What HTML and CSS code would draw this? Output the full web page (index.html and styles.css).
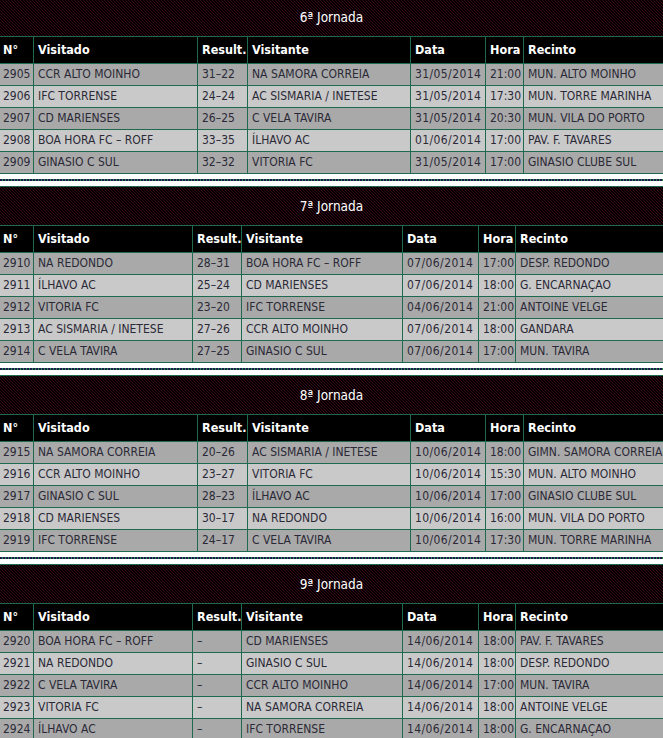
FILE: index.html
```html
<!DOCTYPE html>
<html lang="pt">
<head>
<meta charset="utf-8">
<title>Jornadas</title>
<link rel="stylesheet" href="styles.css">
</head>
<body>
<div class="page">

  <section class="round">
    <div class="title">6ª Jornada</div>
    <div class="grid wide">
      <div class="row head"><div>N°</div><div>Visitado</div><div>Result.</div><div>Visitante</div><div>Data</div><div>Hora</div><div>Recinto</div></div>
      <div class="row odd"><div>2905</div><div>CCR ALTO MOINHO</div><div>31–22</div><div>NA SAMORA CORREIA</div><div class="date">31/05/2014</div><div>21:00</div><div>MUN. ALTO MOINHO</div></div>
      <div class="row even"><div>2906</div><div>IFC TORRENSE</div><div>24–24</div><div>AC SISMARIA / INETESE</div><div class="date">31/05/2014</div><div>17:30</div><div>MUN. TORRE MARINHA</div></div>
      <div class="row odd"><div>2907</div><div>CD MARIENSES</div><div>26–25</div><div>C VELA TAVIRA</div><div class="date">31/05/2014</div><div>20:30</div><div>MUN. VILA DO PORTO</div></div>
      <div class="row even"><div>2908</div><div>BOA HORA FC – ROFF</div><div>33–35</div><div>ÍLHAVO AC</div><div class="date">01/06/2014</div><div>17:00</div><div>PAV. F. TAVARES</div></div>
      <div class="row odd"><div>2909</div><div>GINASIO C SUL</div><div>32–32</div><div>VITORIA FC</div><div class="date">31/05/2014</div><div>17:00</div><div>GINASIO CLUBE SUL</div></div>
    </div>
    <div class="sep"><div class="dash"></div></div>
  </section>

  <section class="round">
    <div class="title">7ª Jornada</div>
    <div class="grid narrow">
      <div class="row head"><div>N°</div><div>Visitado</div><div>Result.</div><div>Visitante</div><div>Data</div><div>Hora</div><div>Recinto</div></div>
      <div class="row odd"><div>2910</div><div>NA REDONDO</div><div>28–31</div><div>BOA HORA FC – ROFF</div><div class="date">07/06/2014</div><div>17:00</div><div>DESP. REDONDO</div></div>
      <div class="row even"><div>2911</div><div>ÍLHAVO AC</div><div>25–24</div><div>CD MARIENSES</div><div class="date">07/06/2014</div><div>18:00</div><div>G. ENCARNAÇAO</div></div>
      <div class="row odd"><div>2912</div><div>VITORIA FC</div><div>23–20</div><div>IFC TORRENSE</div><div class="date">04/06/2014</div><div>21:00</div><div>ANTOINE VELGE</div></div>
      <div class="row even"><div>2913</div><div>AC SISMARIA / INETESE</div><div>27–26</div><div>CCR ALTO MOINHO</div><div class="date">07/06/2014</div><div>18:00</div><div>GANDARA</div></div>
      <div class="row odd"><div>2914</div><div>C VELA TAVIRA</div><div>27–25</div><div>GINASIO C SUL</div><div class="date">07/06/2014</div><div>17:00</div><div>MUN. TAVIRA</div></div>
    </div>
    <div class="sep"><div class="dash"></div></div>
  </section>

  <section class="round">
    <div class="title">8ª Jornada</div>
    <div class="grid wide">
      <div class="row head"><div>N°</div><div>Visitado</div><div>Result.</div><div>Visitante</div><div>Data</div><div>Hora</div><div>Recinto</div></div>
      <div class="row odd"><div>2915</div><div>NA SAMORA CORREIA</div><div>20–26</div><div>AC SISMARIA / INETESE</div><div class="date">10/06/2014</div><div>18:00</div><div>GIMN. SAMORA CORREIA</div></div>
      <div class="row even"><div>2916</div><div>CCR ALTO MOINHO</div><div>23–27</div><div>VITORIA FC</div><div class="date">10/06/2014</div><div>15:30</div><div>MUN. ALTO MOINHO</div></div>
      <div class="row odd"><div>2917</div><div>GINASIO C SUL</div><div>28–23</div><div>ÍLHAVO AC</div><div class="date">10/06/2014</div><div>17:00</div><div>GINASIO CLUBE SUL</div></div>
      <div class="row even"><div>2918</div><div>CD MARIENSES</div><div>30–17</div><div>NA REDONDO</div><div class="date">10/06/2014</div><div>16:00</div><div>MUN. VILA DO PORTO</div></div>
      <div class="row odd"><div>2919</div><div>IFC TORRENSE</div><div>24–17</div><div>C VELA TAVIRA</div><div class="date">10/06/2014</div><div>17:30</div><div>MUN. TORRE MARINHA</div></div>
    </div>
    <div class="sep"><div class="dash"></div></div>
  </section>

  <section class="round">
    <div class="title">9ª Jornada</div>
    <div class="grid narrow">
      <div class="row head"><div>N°</div><div>Visitado</div><div>Result.</div><div>Visitante</div><div>Data</div><div>Hora</div><div>Recinto</div></div>
      <div class="row odd"><div>2920</div><div>BOA HORA FC – ROFF</div><div>–</div><div>CD MARIENSES</div><div class="date">14/06/2014</div><div>18:00</div><div>PAV. F. TAVARES</div></div>
      <div class="row even"><div>2921</div><div>NA REDONDO</div><div>–</div><div>GINASIO C SUL</div><div class="date">14/06/2014</div><div>18:00</div><div>DESP. REDONDO</div></div>
      <div class="row odd"><div>2922</div><div>C VELA TAVIRA</div><div>–</div><div>CCR ALTO MOINHO</div><div class="date">14/06/2014</div><div>17:00</div><div>MUN. TAVIRA</div></div>
      <div class="row even"><div>2923</div><div>VITORIA FC</div><div>–</div><div>NA SAMORA CORREIA</div><div class="date">14/06/2014</div><div>18:00</div><div>ANTOINE VELGE</div></div>
      <div class="row odd"><div>2924</div><div>ÍLHAVO AC</div><div>–</div><div>IFC TORRENSE</div><div class="date">14/06/2014</div><div>18:00</div><div>G. ENCARNAÇAO</div></div>
    </div>
    <div class="sep"><div class="dash"></div></div>
  </section>

</div>
</body>
</html>
```

FILE: styles.css
```css
html, body {
  margin: 0;
  padding: 0;
  background: #ffffff;
}

body {
  font-family: "DejaVu Sans Condensed", "DejaVu Sans", sans-serif;
  font-stretch: semi-condensed;
  font-size: 12px;
  color: #2b2937;
}

.page {
  margin-top: -3px;
  width: 663px;
  overflow: hidden;
}

.title {
  border-top: 1px solid #1f6a4e;
  height: 38px;
  line-height: 38px;
  text-align: center;
  color: #ffffff;
  font-size: 13.5px;
  background-color: #14030a;
  background-image: repeating-linear-gradient(45deg, #000000 0 1.0607px, #3a0719 1.0607px 2.1213px);
}

.grid {
  border-top: 1px solid #1f6a4e;
}

.row {
  display: grid;
  border-bottom: 1px solid #1f6a4e;
}

.wide .row {
  grid-template-columns: 33px 164px 50px 163px 75px 38px 1fr;
}

.narrow .row {
  grid-template-columns: 33px 159px 49px 161px 76px 37px 1fr;
}

.row > div {
  padding: 0 4px;
  white-space: nowrap;
  overflow: hidden;
  border-left: 1px solid #1f6a4e;
  height: 21px;
  line-height: 21px;
}

.row > div:first-child {
  border-left: none;
  padding-left: 3px;
  padding-right: 0;
}

.row .date {
  letter-spacing: 0.4px;
}

.head {
  background: #000000;
  color: #ffffff;
  font-weight: bold;
  font-size: 12.5px;
}

.head > div {
  height: 26px;
  line-height: 26px;
}

.odd {
  background: #a9a9a9;
}

.even {
  background: #c9c9c9;
}

.sep {
  padding: 5px 0;
  background: #ffffff;
}

.dash {
  height: 2px;
  background: repeating-linear-gradient(90deg, #1b1b48 0 2px, #2b8a5c 2px 3px);
}
```
